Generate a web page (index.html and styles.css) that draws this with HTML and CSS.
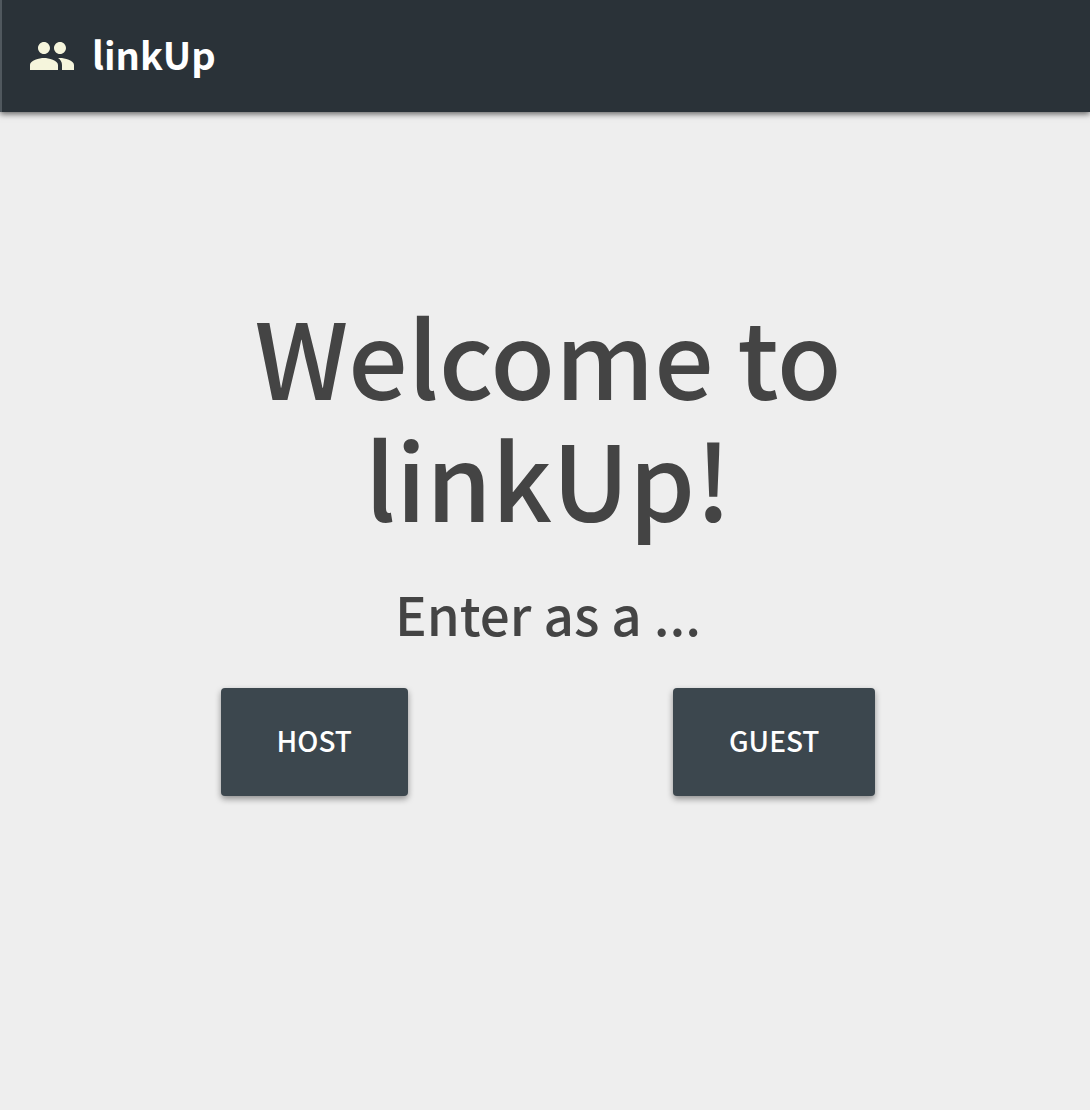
FILE: index.html
```html
<!DOCTYPE html>
<html lang="en">
<head>
<meta charset="utf-8">
<meta name="viewport" content="width=device-width, initial-scale=1">
<title>linkUp</title>
<link rel="stylesheet" href="styles.css">
</head>
<body>
<header class="app-bar">
  <svg class="app-icon" viewBox="0 0 24 24" aria-hidden="true"><path d="M16 11c1.660 0 2.990-1.340 2.990-3S17.660 5 16 5c-1.660 0-3 1.340-3 3s1.340 3 3 3zm-8 0c1.660 0 2.990-1.340 2.990-3S9.660 5 8 5C6.340 5 5 6.340 5 8s1.340 3 3 3zm0 2c-2.330 0-7 1.170-7 3.500V19h14v-2.500c0-2.330-4.670-3.500-7-3.500zm8 0c-.29 0-.62.020-.97.050 1.160.84 1.970 1.970 1.970 3.450V19h6v-2.500c0-2.330-4.670-3.500-7-3.500z"/></svg>
  <span class="app-name">linkUp</span>
</header>
<main class="welcome">
  <h1 class="title">Welcome to linkUp!</h1>
  <h2 class="subtitle">Enter as a ...</h2>
  <div class="actions">
    <button class="button" type="button">HOST</button>
    <button class="button" type="button">GUEST</button>
  </div>
</main>
</body>
</html>
```
FILE: styles.css
```css
* {
  box-sizing: border-box;
}

body {
  margin: 0;
  min-height: 100vh;
  background: #eee;
  color: #444;
  font-family: "Noto Sans CJK JP", "Noto Sans", sans-serif;
  font-weight: 500;
}

.app-bar {
  display: flex;
  align-items: center;
  gap: 16px;
  min-height: 112px;
  padding: 0 26px;
  border-left: 2px solid #50585e;
  background: #2a3238;
  color: #fff;
  box-shadow: 0 2px 6px rgba(0, 0, 0, 0.6);
}

.app-icon {
  width: 48px;
  height: 48px;
  fill: #f5f5dc;
}

.app-name {
  padding-bottom: 4px;
  font-size: 38px;
  font-weight: 700;
  line-height: 56px;
}

.welcome {
  padding: 181px 82px 0 88px;
  text-align: center;
}

.title {
  max-width: 680px;
  margin: 0 auto;
  font-size: 105px;
  font-weight: 500;
  line-height: 122px;
}

.subtitle {
  margin: 40px 0 39px;
  font-size: 53px;
  font-weight: 500;
  line-height: 72px;
}

.actions {
  display: flex;
  flex-wrap: wrap;
  justify-content: space-around;
  gap: 16px 0;
}

.button {
  padding: 30px 56px 34px;
  border: 0;
  border-radius: 4px;
  background: #3c474e;
  color: #fff;
  font: inherit;
  font-size: 28px;
  line-height: 44px;
  box-shadow: 0 3px 6px rgba(0, 0, 0, 0.4);
  cursor: pointer;
}
```
